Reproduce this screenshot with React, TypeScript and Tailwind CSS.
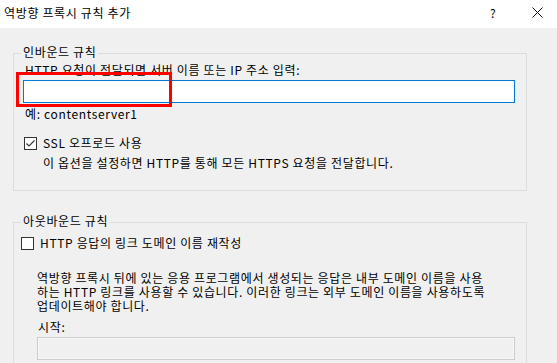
import React from "react";

const font = { fontFamily: '"Noto Sans CJK KR", "Noto Sans", sans-serif' };

function CheckBox({ checked }: { checked?: boolean }) {
  return (
    <div className="w-[13px] h-[13px] border border-[#333333] bg-white flex items-center justify-center shrink-0">
      {checked && (
        <svg width="11" height="11" viewBox="0 0 11 11">
          <path d="M1.5 5.5 L4 8 L9.5 2.5" fill="none" stroke="#333333" strokeWidth="1.1" />
        </svg>
      )}
    </div>
  );
}

export default function App() {
  return (
    <div
      className="w-[557px] h-[363px] bg-[#f0f0f0] overflow-hidden text-[12px] leading-[14px] tracking-[0.65px] text-black flex flex-col whitespace-nowrap"
      style={font}
    >
      {/* title bar */}
      <div className="h-[28px] bg-white flex items-center pl-[4px] shrink-0">
        <span className="flex-1 -mt-[2px]">역방향 프록시 규칙 추가</span>
        <span className="w-[10px] mr-[32px] -mt-[2px]">?</span>
        <svg width="11" height="11" viewBox="0 0 11 11" className="mr-[14px] -mt-[3px]">
          <path d="M0.5 0.5 L10.5 10.5 M10.5 0.5 L0.5 10.5" stroke="#111" strokeWidth="1" />
        </svg>
      </div>

      {/* inbound group */}
      <div className="relative mt-[25px] ml-[13px] w-[514px] h-[138px] border border-[#dcdcdc] pl-[9px] pr-[12px] pt-[9px] shrink-0">
        <span className="absolute -top-[9px] left-[7px] px-[2px] bg-[#f0f0f0]">인바운드 규칙</span>
        <div className="pl-[2px]">HTTP 요청이 전달되면 서버 이름 또는 IP 주소 입력:</div>
        <div className="relative mt-[3px] h-[23px] w-[492px] bg-white border border-[#0078d7]">
          <div className="absolute -left-[8px] -top-[9px] w-[156px] h-[35px] border-[3px] border-[#ff0000]" />
        </div>
        <div className="pl-[2px] mt-[4px]">예: contentserver1</div>
        <div className="flex items-center mt-[15px] ml-[1px] gap-[6px]">
          <CheckBox checked />
          <span>SSL 오프로드 사용</span>
        </div>
        <div className="pl-[20px] mt-[6px]">이 옵션을 설정하면 HTTP를 통해 모든 HTTPS 요청을 전달합니다.</div>
      </div>

      {/* outbound group */}
      <div className="relative mt-[31px] ml-[13px] w-[514px] flex-1 border border-b-0 border-[#dcdcdc] pl-[7px] pr-[12px] pt-[13px]">
        <span className="absolute -top-[9px] left-[7px] px-[2px] bg-[#f0f0f0]">아웃바운드 규칙</span>
        <div className="flex items-center gap-[6px]">
          <CheckBox />
          <span>HTTP 응답의 링크 도메인 이름 재작성</span>
        </div>
        <div className="pl-[16px] mt-[21px]">
          <div>역방향 프록시 뒤에 있는 응용 프로그램에서 생성되는 응답은 내부 도메인 이름을 사용</div>
          <div>하는 HTTP 링크를 사용할 수 있습니다. 이러한 링크는 외부 도메인 이름을 사용하도록</div>
          <div>업데이트해야 합니다.</div>
          <div className="mt-[7px] pl-[1px]">시작:</div>
          <div className="mt-[3px] h-[23px] w-[478px] border border-[#cccccc] shadow-[inset_0_0_0_1px_#f8f8f8] bg-[#f0f0f0]" />
        </div>
      </div>
    </div>
  );
}
